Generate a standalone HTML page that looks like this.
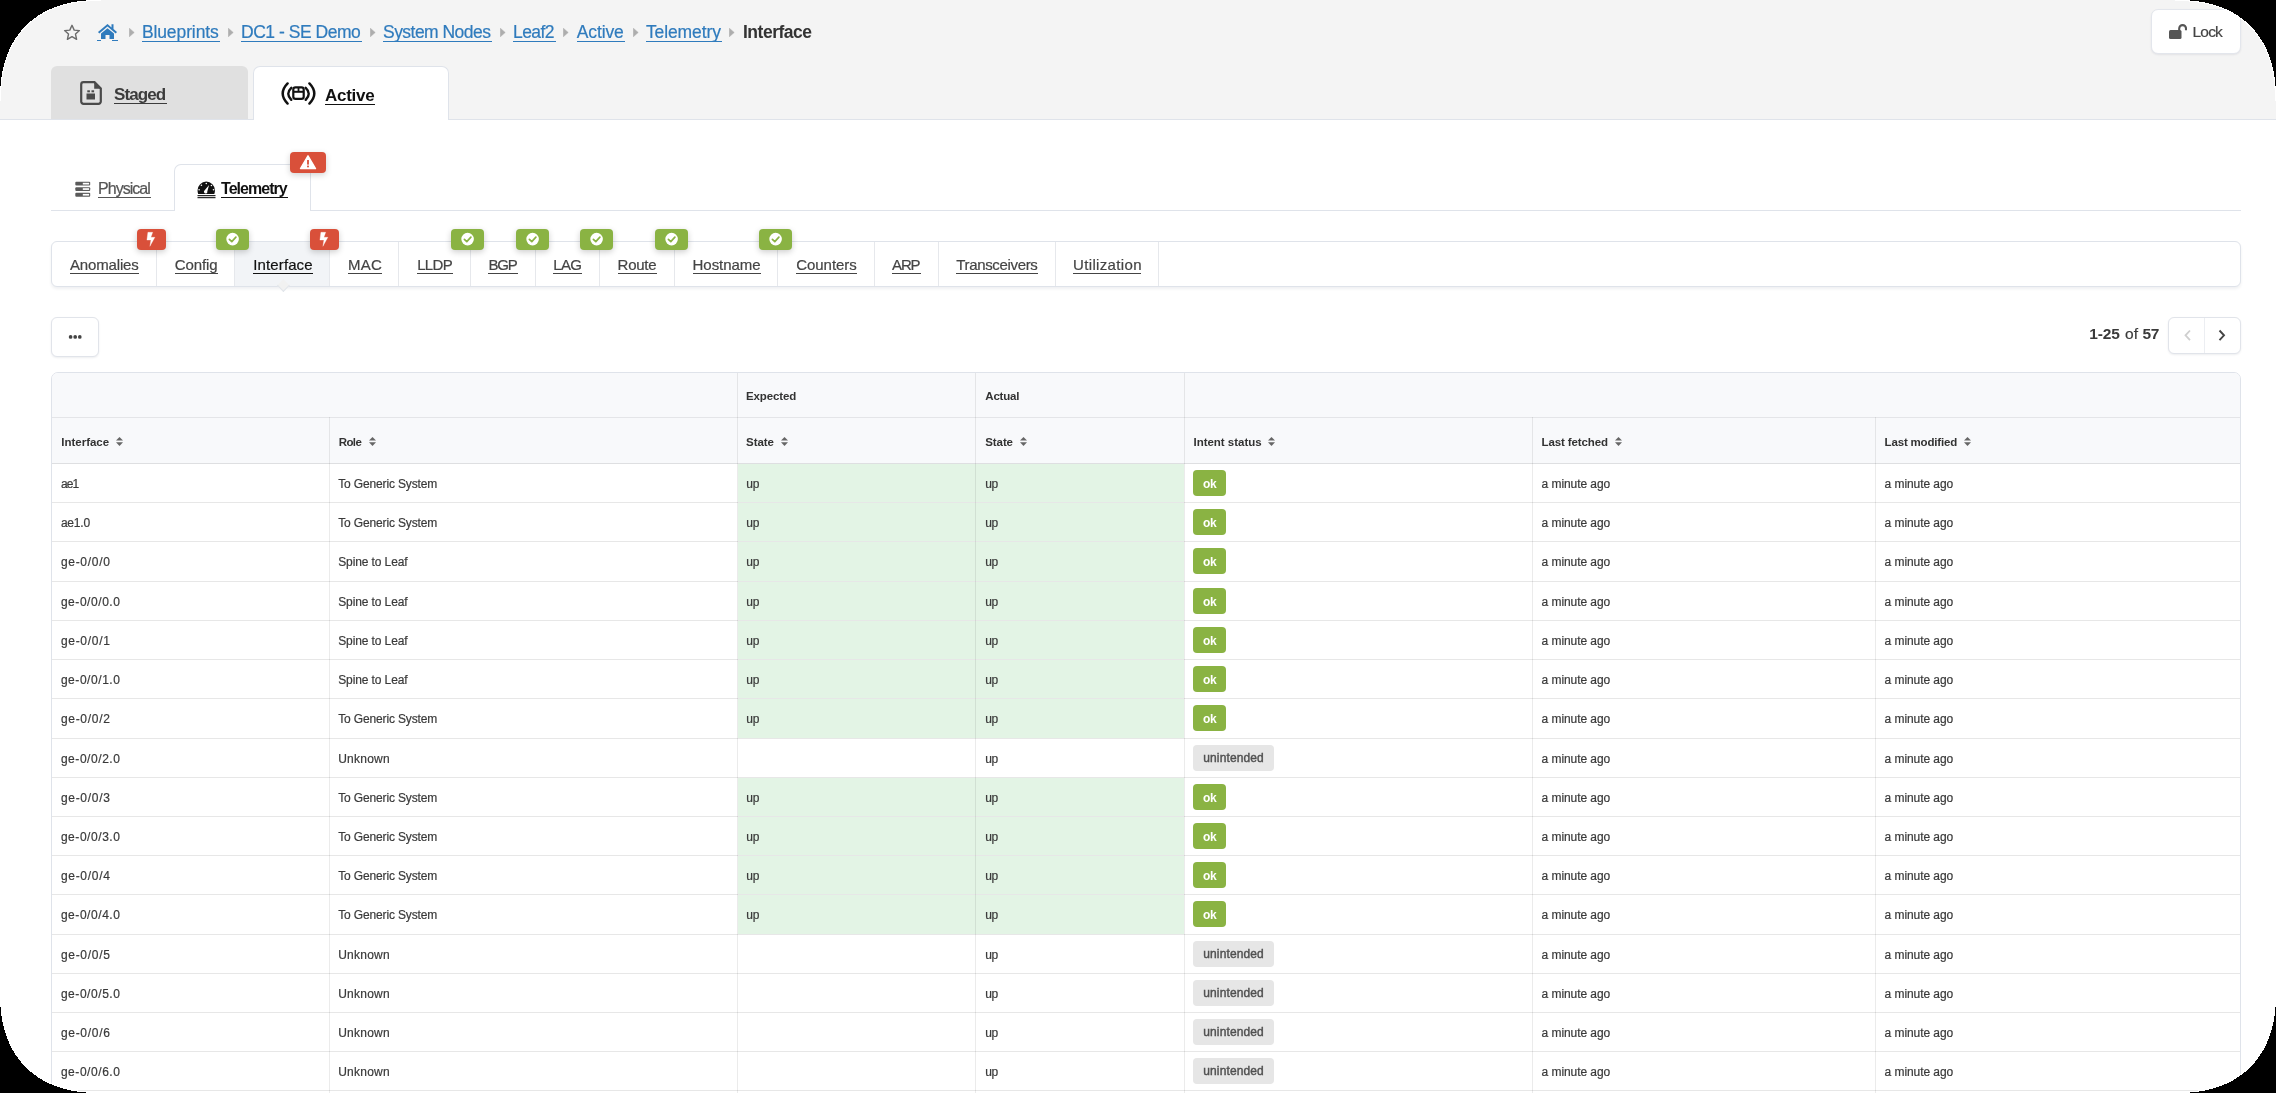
<!DOCTYPE html>
<html><head><meta charset="utf-8">
<style>
html,body{margin:0;padding:0;background:#000;width:2276px;height:1093px;overflow:hidden}
*{box-sizing:border-box}
body{font-family:"Liberation Sans",sans-serif;-webkit-font-smoothing:antialiased}
.page{position:absolute;left:0;top:0;width:2276px;height:1093px;overflow:hidden;background:#fff;will-change:transform}
.cn{position:absolute;display:block}
.a{position:absolute}
.t{position:absolute;white-space:nowrap}
svg{display:block}
</style></head><body>
<div class="page">
<div class="a" style="left:0;top:0;width:2276px;height:119px;background:#f4f4f4"></div>
<div class="a" style="left:0;top:119px;width:2276px;height:1px;background:#dfe3ea"></div>
<div class="a" style="left:63px;top:24px;width:18px;height:17px"><svg width="18" height="17" viewBox="0 0 18 17"><path d="M9 1.3 L11.2 6.1 L16.4 6.6 L12.5 10.1 L13.6 15.3 L9 12.6 L4.4 15.3 L5.5 10.1 L1.6 6.6 L6.8 6.1 Z" fill="none" stroke="#6b6b6b" stroke-width="1.4" stroke-linejoin="round"/></svg></div>
<div class="a" style="left:97px;top:23px;width:21px;height:17px"><svg width="21" height="17" viewBox="0 0 21 17"><path d="M10.5 1 L1 9 L2.3 10.4 L10.5 3.6 L18.7 10.4 L20 9 L16.5 6.1 L16.5 1.2 L14.5 1.2 L14.5 4.4 Z" fill="#2f7bbd"/><path d="M4 10.5 L10.5 5.2 L17 10.5 L17 16 L12.5 16 L12.5 12 L8.5 12 L8.5 16 L4 16 Z" fill="#2f7bbd"/></svg></div>
<div class="a" style="left:97.0px;top:40px;width:4.0px;height:1px;background:#2f7bbd"></div>
<div class="a" style="left:112.0px;top:40px;width:6.0px;height:1px;background:#2f7bbd"></div>
<div class="a" style="left:128.9px;top:28px;width:6px;height:9px"><svg width="6" height="9" viewBox="0 0 6 9"><path d="M0.3 0.2 L5.2 4.5 L0.3 8.8 Z" fill="#adadad" stroke="#adadad" stroke-width="0.5" stroke-linejoin="round"/></svg></div>
<div class="a" style="left:227.8px;top:28px;width:6px;height:9px"><svg width="6" height="9" viewBox="0 0 6 9"><path d="M0.3 0.2 L5.2 4.5 L0.3 8.8 Z" fill="#adadad" stroke="#adadad" stroke-width="0.5" stroke-linejoin="round"/></svg></div>
<div class="a" style="left:369.6px;top:28px;width:6px;height:9px"><svg width="6" height="9" viewBox="0 0 6 9"><path d="M0.3 0.2 L5.2 4.5 L0.3 8.8 Z" fill="#adadad" stroke="#adadad" stroke-width="0.5" stroke-linejoin="round"/></svg></div>
<div class="a" style="left:500.0px;top:28px;width:6px;height:9px"><svg width="6" height="9" viewBox="0 0 6 9"><path d="M0.3 0.2 L5.2 4.5 L0.3 8.8 Z" fill="#adadad" stroke="#adadad" stroke-width="0.5" stroke-linejoin="round"/></svg></div>
<div class="a" style="left:563.0px;top:28px;width:6px;height:9px"><svg width="6" height="9" viewBox="0 0 6 9"><path d="M0.3 0.2 L5.2 4.5 L0.3 8.8 Z" fill="#adadad" stroke="#adadad" stroke-width="0.5" stroke-linejoin="round"/></svg></div>
<div class="a" style="left:632.8px;top:28px;width:6px;height:9px"><svg width="6" height="9" viewBox="0 0 6 9"><path d="M0.3 0.2 L5.2 4.5 L0.3 8.8 Z" fill="#adadad" stroke="#adadad" stroke-width="0.5" stroke-linejoin="round"/></svg></div>
<div class="a" style="left:729.3px;top:28px;width:6px;height:9px"><svg width="6" height="9" viewBox="0 0 6 9"><path d="M0.3 0.2 L5.2 4.5 L0.3 8.8 Z" fill="#adadad" stroke="#adadad" stroke-width="0.5" stroke-linejoin="round"/></svg></div>
<div class="t" style="left:141.90px;top:24px;font-size:17.5px;line-height:17.5px;color:#2f7bbd;-webkit-text-stroke:0.2px currentColor;letter-spacing:-0.103px;">Blueprints</div>
<div class="a" style="left:141.9px;top:41px;width:77.9px;height:1px;background:#2f7bbd"></div>
<div class="t" style="left:241.00px;top:24px;font-size:17.5px;line-height:17.5px;color:#2f7bbd;-webkit-text-stroke:0.2px currentColor;letter-spacing:-0.471px;">DC1 - SE Demo</div>
<div class="a" style="left:241.0px;top:41px;width:120.8px;height:1px;background:#2f7bbd"></div>
<div class="t" style="left:383.00px;top:24px;font-size:17.5px;line-height:17.5px;color:#2f7bbd;-webkit-text-stroke:0.2px currentColor;letter-spacing:-0.536px;">System Nodes</div>
<div class="a" style="left:383.0px;top:41px;width:108.9px;height:1px;background:#2f7bbd"></div>
<div class="t" style="left:513.00px;top:24px;font-size:17.5px;line-height:17.5px;color:#2f7bbd;-webkit-text-stroke:0.2px currentColor;letter-spacing:-0.549px;">Leaf2</div>
<div class="a" style="left:513.0px;top:41px;width:42.6px;height:1px;background:#2f7bbd"></div>
<div class="t" style="left:576.80px;top:24px;font-size:17.5px;line-height:17.5px;color:#2f7bbd;-webkit-text-stroke:0.2px currentColor;letter-spacing:-0.131px;">Active</div>
<div class="a" style="left:576.8px;top:41px;width:48.0px;height:1px;background:#2f7bbd"></div>
<div class="t" style="left:645.90px;top:24px;font-size:17.5px;line-height:17.5px;color:#2f7bbd;-webkit-text-stroke:0.2px currentColor;letter-spacing:-0.107px;">Telemetry</div>
<div class="a" style="left:645.9px;top:41px;width:76.0px;height:1px;background:#2f7bbd"></div>
<div class="t" style="left:743.00px;top:24px;font-size:17.5px;line-height:17.5px;color:#333;font-weight:bold;letter-spacing:-0.494px;">Interface</div>
<div class="a" style="left:51px;top:66px;width:197px;height:53px;background:#e0e0e0;border-radius:6px 6px 0 0"></div>
<div class="a" style="left:253px;top:66px;width:196px;height:54px;background:#fff;border:1px solid #dfe3ea;border-bottom:none;border-radius:7px 7px 0 0"></div>
<div class="a" style="left:80px;top:81px;width:22px;height:24px"><svg width="22" height="24" viewBox="0 0 22 24"><path d="M3.5 1.2 H14.5 L20.8 7.5 V20.5 A2.3 2.3 0 0 1 18.5 22.8 H3.5 A2.3 2.3 0 0 1 1.2 20.5 V3.5 A2.3 2.3 0 0 1 3.5 1.2 Z" fill="none" stroke="#4a4a4a" stroke-width="2.2"/><path d="M14.2 1.5 L20.5 7.8 L14.2 7.8 Z" fill="#4a4a4a"/><rect x="6.5" y="12.5" width="8.5" height="6" fill="#4a4a4a"/><rect x="7.3" y="9.3" width="2.6" height="2" fill="#4a4a4a"/><rect x="11.5" y="9.3" width="2.6" height="2" fill="#4a4a4a"/></svg></div>
<div class="t" style="left:114.00px;top:86px;font-size:17px;line-height:17px;color:#3c3c3c;font-weight:bold;letter-spacing:-0.917px;">Staged</div>
<div class="a" style="left:114.0px;top:103px;width:52.5px;height:1px;background:#3c3c3c"></div>
<div class="a" style="left:281px;top:82px;width:35px;height:23px"><svg width="35" height="23" viewBox="0 0 35 23"><path d="M6.6 1.4 Q-3.2 11.5 6.6 21.6" fill="none" stroke="#111" stroke-width="2.4" stroke-linecap="round"/><path d="M28.4 1.4 Q38.2 11.5 28.4 21.6" fill="none" stroke="#111" stroke-width="2.4" stroke-linecap="round"/><path d="M10.3 5.8 Q4.2 11.5 10.3 17.8" fill="none" stroke="#111" stroke-width="2.4" stroke-linecap="round"/><path d="M24.7 5.8 Q30.8 11.5 24.7 17.8" fill="none" stroke="#111" stroke-width="2.4" stroke-linecap="round"/><rect x="12.3" y="5.3" width="10.4" height="11.6" rx="2.2" fill="none" stroke="#111" stroke-width="2.2"/><line x1="12.3" y1="9.8" x2="22.7" y2="9.8" stroke="#111" stroke-width="2"/><line x1="17.5" y1="5.3" x2="17.5" y2="9.8" stroke="#111" stroke-width="1.8"/></svg></div>
<div class="t" style="left:325.00px;top:87px;font-size:17px;line-height:17px;color:#111;font-weight:bold;letter-spacing:-0.263px;">Active</div>
<div class="a" style="left:325.0px;top:104px;width:50.0px;height:1px;background:#111"></div>
<div class="a" style="left:2151px;top:9px;width:90px;height:45px;background:#fff;border:1px solid #e3e6ec;border-radius:7px;box-shadow:0 1px 2px rgba(20,30,60,.08)"></div>
<div class="a" style="left:2168px;top:23px;width:19px;height:17px"><svg width="19" height="17" viewBox="0 0 19 17"><rect x="1" y="7" width="12.5" height="9" rx="1.5" fill="#555"/><path d="M11.2 7.5 V5.5 A3.4 3.4 0 0 1 18 5.5 V7.3" fill="none" stroke="#555" stroke-width="2.1"/></svg></div>
<div class="t" style="left:2192.60px;top:24px;font-size:15.5px;line-height:15.5px;color:#444;-webkit-text-stroke:0.2px currentColor;letter-spacing:-0.850px;">Lock</div>
<div class="a" style="left:51px;top:210px;width:2190px;height:1px;background:#dfe3ea"></div>
<div class="a" style="left:174px;top:164px;width:137px;height:47px;background:#fff;border:1px solid #dfe3ea;border-bottom:none;border-radius:7px 7px 0 0"></div>
<div class="a" style="left:75px;top:181px;width:16px;height:17px"><svg width="16" height="17" viewBox="0 0 16 17"><rect x="0.3" y="0.8" width="14.9" height="3.7" rx="1" fill="#5a5a5a"/><rect x="0.3" y="6.2" width="14.9" height="3.7" rx="1" fill="#5a5a5a"/><rect x="0.3" y="11.8" width="14.9" height="3.9" rx="1" fill="#5a5a5a"/><rect x="7.8" y="1.8" width="6.3" height="1.7" fill="#fff"/><rect x="7.8" y="7.2" width="6.3" height="1.7" fill="#fff"/><rect x="7.8" y="12.9" width="6.3" height="1.7" fill="#fff"/></svg></div>
<div class="t" style="left:98.10px;top:181px;font-size:16px;line-height:16px;color:#555;-webkit-text-stroke:0.2px currentColor;letter-spacing:-0.987px;">Physical</div>
<div class="a" style="left:98.0px;top:197px;width:53.0px;height:1px;background:#555"></div>
<div class="a" style="left:197px;top:181px;width:19px;height:18px"><svg width="19" height="18" viewBox="0 0 19 18"><path d="M9.25 0.6 A8.7 8.7 0 0 1 17.95 9.3 Q17.95 11.4 17.3 12.9 H1.2 Q0.55 11.4 0.55 9.3 A8.7 8.7 0 0 1 9.25 0.6 Z" fill="#111"/><circle cx="9.3" cy="2.5" r="0.8" fill="#fff"/><circle cx="4.4" cy="4.3" r="0.8" fill="#fff"/><circle cx="14.4" cy="4.5" r="0.8" fill="#fff"/><circle cx="2.1" cy="8.8" r="0.8" fill="#fff"/><circle cx="16.5" cy="8.8" r="0.8" fill="#fff"/><path d="M12.1 4.1 L10.3 10.4 A1.7 1.7 0 1 1 7.5 9.6 Z" fill="#fff"/><rect x="0.5" y="14.1" width="18" height="1.1" fill="#111"/><rect x="0.5" y="16.1" width="18" height="1.1" fill="#111"/></svg></div>
<div class="t" style="left:221.00px;top:181px;font-size:16px;line-height:16px;color:#111;font-weight:bold;letter-spacing:-0.959px;">Telemetry</div>
<div class="a" style="left:221.0px;top:197px;width:67.0px;height:1px;background:#111"></div>
<div class="a" style="left:290px;top:152px;width:36px;height:21px;background:#d9503a;border-radius:4px;box-shadow:0 2px 6px rgba(0,0,0,.18)"><svg width="36" height="21" viewBox="0 0 36 21" style="position:absolute;left:0;top:0"><path d="M18 3.8 L25.5 16.6 H10.5 Z" fill="#fff" stroke="#fff" stroke-width="1.4" stroke-linejoin="round"/><rect x="17.1" y="8" width="1.8" height="4.6" fill="#d9503a"/><rect x="17.1" y="13.6" width="1.8" height="1.7" fill="#d9503a"/></svg></div>
<div class="a" style="left:51px;top:241px;width:2190px;height:46px;background:#fff;border:1px solid #dfe3ea;border-radius:6px;box-shadow:0 2px 3px rgba(30,40,70,.07)"></div>
<div class="a" style="left:234.5px;top:242px;width:94.5px;height:44px;background:#f2f4f7"></div>
<div class="a" style="left:156px;top:242px;width:1px;height:44px;background:#e6e8ec"></div>
<div class="t" style="left:70.00px;top:257px;font-size:15px;line-height:15px;color:#444;-webkit-text-stroke:0.2px currentColor;letter-spacing:-0.154px;">Anomalies</div>
<div class="a" style="left:70.0px;top:273px;width:68.8px;height:1px;background:#444"></div>
<div class="a" style="left:234px;top:242px;width:1px;height:44px;background:#e6e8ec"></div>
<div class="t" style="left:174.80px;top:257px;font-size:15px;line-height:15px;color:#444;-webkit-text-stroke:0.2px currentColor;letter-spacing:-0.092px;">Config</div>
<div class="a" style="left:174.8px;top:273px;width:42.9px;height:1px;background:#444"></div>
<div class="a" style="left:329px;top:242px;width:1px;height:44px;background:#e6e8ec"></div>
<div class="t" style="left:253.30px;top:257px;font-size:15px;line-height:15px;color:#111;-webkit-text-stroke:0.2px currentColor;letter-spacing:0.114px;">Interface</div>
<div class="a" style="left:253.3px;top:273px;width:59.3px;height:1px;background:#111"></div>
<div class="a" style="left:398px;top:242px;width:1px;height:44px;background:#e6e8ec"></div>
<div class="t" style="left:348.10px;top:257px;font-size:15px;line-height:15px;color:#444;-webkit-text-stroke:0.2px currentColor;letter-spacing:0.236px;">MAC</div>
<div class="a" style="left:348.1px;top:273px;width:33.8px;height:1px;background:#444"></div>
<div class="a" style="left:470px;top:242px;width:1px;height:44px;background:#e6e8ec"></div>
<div class="t" style="left:417.20px;top:257px;font-size:15px;line-height:15px;color:#444;-webkit-text-stroke:0.2px currentColor;letter-spacing:-0.672px;">LLDP</div>
<div class="a" style="left:417.2px;top:273px;width:35.5px;height:1px;background:#444"></div>
<div class="a" style="left:535px;top:242px;width:1px;height:44px;background:#e6e8ec"></div>
<div class="t" style="left:488.40px;top:257px;font-size:15px;line-height:15px;color:#444;-webkit-text-stroke:0.2px currentColor;letter-spacing:-1.136px;">BGP</div>
<div class="a" style="left:488.4px;top:273px;width:29.4px;height:1px;background:#444"></div>
<div class="a" style="left:599px;top:242px;width:1px;height:44px;background:#e6e8ec"></div>
<div class="t" style="left:553.30px;top:257px;font-size:15px;line-height:15px;color:#444;-webkit-text-stroke:0.2px currentColor;letter-spacing:-0.708px;">LAG</div>
<div class="a" style="left:553.3px;top:273px;width:28.6px;height:1px;background:#444"></div>
<div class="a" style="left:674px;top:242px;width:1px;height:44px;background:#e6e8ec"></div>
<div class="t" style="left:617.60px;top:257px;font-size:15px;line-height:15px;color:#444;-webkit-text-stroke:0.2px currentColor;letter-spacing:-0.258px;">Route</div>
<div class="a" style="left:617.6px;top:273px;width:39.0px;height:1px;background:#444"></div>
<div class="a" style="left:777px;top:242px;width:1px;height:44px;background:#e6e8ec"></div>
<div class="t" style="left:692.60px;top:257px;font-size:15px;line-height:15px;color:#444;-webkit-text-stroke:0.2px currentColor;letter-spacing:-0.054px;">Hostname</div>
<div class="a" style="left:692.6px;top:273px;width:68.0px;height:1px;background:#444"></div>
<div class="a" style="left:874px;top:242px;width:1px;height:44px;background:#e6e8ec"></div>
<div class="t" style="left:796.20px;top:257px;font-size:15px;line-height:15px;color:#444;-webkit-text-stroke:0.2px currentColor;letter-spacing:-0.039px;">Counters</div>
<div class="a" style="left:796.2px;top:273px;width:60.6px;height:1px;background:#444"></div>
<div class="a" style="left:938px;top:242px;width:1px;height:44px;background:#e6e8ec"></div>
<div class="t" style="left:892.10px;top:257px;font-size:15px;line-height:15px;color:#444;-webkit-text-stroke:0.2px currentColor;letter-spacing:-1.164px;">ARP</div>
<div class="a" style="left:892.1px;top:273px;width:28.5px;height:1px;background:#444"></div>
<div class="a" style="left:1055px;top:242px;width:1px;height:44px;background:#e6e8ec"></div>
<div class="t" style="left:956.30px;top:257px;font-size:15px;line-height:15px;color:#444;-webkit-text-stroke:0.2px currentColor;letter-spacing:-0.345px;">Transceivers</div>
<div class="a" style="left:956.3px;top:273px;width:81.5px;height:1px;background:#444"></div>
<div class="a" style="left:1158px;top:242px;width:1px;height:44px;background:#e6e8ec"></div>
<div class="t" style="left:1073.10px;top:257px;font-size:15px;line-height:15px;color:#444;-webkit-text-stroke:0.2px currentColor;letter-spacing:0.338px;">Utilization</div>
<div class="a" style="left:1073.1px;top:273px;width:68.4px;height:1px;background:#444"></div>
<div class="a" style="left:278.6px;top:281.2px;width:8.8px;height:8.8px;background:#f1f1f1;transform:rotate(45deg);border-right:1px solid #e1e5ea;border-bottom:1px solid #e1e5ea"></div>
<div class="a" style="left:137.3px;top:229px;width:29px;height:21px;background:#d9503a;border-radius:4px;box-shadow:0 2px 6px rgba(0,0,0,.2)"><svg width="29" height="21" viewBox="0 0 29 21" style="position:absolute;left:0;top:0"><path d="M10.9 3.3 H15.7 L13.9 8.3 H17.9 L12.9 17.3 L13.9 11.1 H9.9 Z" fill="#fff" stroke="#fff" stroke-width="0.3" stroke-linejoin="round"/></svg></div>
<div class="a" style="left:216px;top:229px;width:33px;height:21px;background:#8ab343;border-radius:4px;box-shadow:0 2px 6px rgba(0,0,0,.2)"><svg width="33" height="21" viewBox="0 0 33 21" style="position:absolute;left:0;top:0"><circle cx="16.6" cy="10.1" r="6.3" fill="#fff"/><path d="M13.4 10.3 L15.8 12.6 L19.9 8.2" fill="none" stroke="#8ab343" stroke-width="1.7" stroke-linecap="round" stroke-linejoin="round"/></svg></div>
<div class="a" style="left:310.2px;top:229px;width:29px;height:21px;background:#d9503a;border-radius:4px;box-shadow:0 2px 6px rgba(0,0,0,.2)"><svg width="29" height="21" viewBox="0 0 29 21" style="position:absolute;left:0;top:0"><path d="M10.9 3.3 H15.7 L13.9 8.3 H17.9 L12.9 17.3 L13.9 11.1 H9.9 Z" fill="#fff" stroke="#fff" stroke-width="0.3" stroke-linejoin="round"/></svg></div>
<div class="a" style="left:451px;top:229px;width:33px;height:21px;background:#8ab343;border-radius:4px;box-shadow:0 2px 6px rgba(0,0,0,.2)"><svg width="33" height="21" viewBox="0 0 33 21" style="position:absolute;left:0;top:0"><circle cx="16.6" cy="10.1" r="6.3" fill="#fff"/><path d="M13.4 10.3 L15.8 12.6 L19.9 8.2" fill="none" stroke="#8ab343" stroke-width="1.7" stroke-linecap="round" stroke-linejoin="round"/></svg></div>
<div class="a" style="left:516px;top:229px;width:33px;height:21px;background:#8ab343;border-radius:4px;box-shadow:0 2px 6px rgba(0,0,0,.2)"><svg width="33" height="21" viewBox="0 0 33 21" style="position:absolute;left:0;top:0"><circle cx="16.6" cy="10.1" r="6.3" fill="#fff"/><path d="M13.4 10.3 L15.8 12.6 L19.9 8.2" fill="none" stroke="#8ab343" stroke-width="1.7" stroke-linecap="round" stroke-linejoin="round"/></svg></div>
<div class="a" style="left:580px;top:229px;width:33px;height:21px;background:#8ab343;border-radius:4px;box-shadow:0 2px 6px rgba(0,0,0,.2)"><svg width="33" height="21" viewBox="0 0 33 21" style="position:absolute;left:0;top:0"><circle cx="16.6" cy="10.1" r="6.3" fill="#fff"/><path d="M13.4 10.3 L15.8 12.6 L19.9 8.2" fill="none" stroke="#8ab343" stroke-width="1.7" stroke-linecap="round" stroke-linejoin="round"/></svg></div>
<div class="a" style="left:655px;top:229px;width:33px;height:21px;background:#8ab343;border-radius:4px;box-shadow:0 2px 6px rgba(0,0,0,.2)"><svg width="33" height="21" viewBox="0 0 33 21" style="position:absolute;left:0;top:0"><circle cx="16.6" cy="10.1" r="6.3" fill="#fff"/><path d="M13.4 10.3 L15.8 12.6 L19.9 8.2" fill="none" stroke="#8ab343" stroke-width="1.7" stroke-linecap="round" stroke-linejoin="round"/></svg></div>
<div class="a" style="left:759px;top:229px;width:33px;height:21px;background:#8ab343;border-radius:4px;box-shadow:0 2px 6px rgba(0,0,0,.2)"><svg width="33" height="21" viewBox="0 0 33 21" style="position:absolute;left:0;top:0"><circle cx="16.6" cy="10.1" r="6.3" fill="#fff"/><path d="M13.4 10.3 L15.8 12.6 L19.9 8.2" fill="none" stroke="#8ab343" stroke-width="1.7" stroke-linecap="round" stroke-linejoin="round"/></svg></div>
<div class="a" style="left:51px;top:317px;width:48px;height:40px;background:#fff;border:1px solid #e1e4ea;border-radius:6px;box-shadow:0 1px 2px rgba(30,40,70,.08)"><svg width="48" height="40" style="position:absolute;left:-1px;top:-1px"><circle cx="19.6" cy="19.9" r="1.85" fill="#444"/><circle cx="24.2" cy="19.9" r="1.85" fill="#444"/><circle cx="28.8" cy="19.9" r="1.85" fill="#444"/></svg></div>
<div class="t" style="left:2089.30px;top:326px;font-size:15.5px;line-height:15.5px;color:#3a3a3a;font-weight:bold;letter-spacing:-0.144px;">1-25</div>
<div class="t" style="left:2124.90px;top:326px;font-size:15.5px;line-height:15.5px;color:#3a3a3a;-webkit-text-stroke:0.2px currentColor;letter-spacing:0.262px;">of</div>
<div class="t" style="left:2142.50px;top:326px;font-size:15.5px;line-height:15.5px;color:#3a3a3a;font-weight:bold;letter-spacing:-0.450px;">57</div>
<div class="a" style="left:2167.5px;top:317px;width:73px;height:37px;background:#fff;border:1px solid #e1e4ea;border-radius:6px;box-shadow:0 1px 2px rgba(30,40,70,.08)"><div style="position:absolute;left:35px;top:0;width:1px;height:35px;background:#eceef2"></div><svg width="73" height="37" style="position:absolute;left:-1px;top:-1px"><path d="M22 13.5 L17.5 18.3 L22 23.1" fill="none" stroke="#cfcfcf" stroke-width="1.8"/><path d="M51.5 13.5 L56 18.3 L51.5 23.1" fill="none" stroke="#444" stroke-width="1.9"/></svg></div>
<div class="a" style="left:51px;top:372px;width:2190px;height:740px;background:#fff;border:1px solid #dfe3ea;border-radius:7px;overflow:hidden"><div style="position:absolute;left:0;top:0;width:100%;height:91px;background:#f8f9fb"></div></div>
<div class="a" style="left:52px;top:417px;width:2188px;height:1px;background:#e4e5e8"></div>
<div class="a" style="left:738px;top:464px;width:446px;height:38px;background:#e3f4e5"></div>
<div class="a" style="left:738px;top:503px;width:446px;height:38px;background:#e3f4e5"></div>
<div class="a" style="left:738px;top:542px;width:446px;height:39px;background:#e3f4e5"></div>
<div class="a" style="left:738px;top:582px;width:446px;height:38px;background:#e3f4e5"></div>
<div class="a" style="left:738px;top:621px;width:446px;height:38px;background:#e3f4e5"></div>
<div class="a" style="left:738px;top:660px;width:446px;height:38px;background:#e3f4e5"></div>
<div class="a" style="left:738px;top:699px;width:446px;height:39px;background:#e3f4e5"></div>
<div class="a" style="left:738px;top:778px;width:446px;height:38px;background:#e3f4e5"></div>
<div class="a" style="left:738px;top:817px;width:446px;height:38px;background:#e3f4e5"></div>
<div class="a" style="left:738px;top:856px;width:446px;height:38px;background:#e3f4e5"></div>
<div class="a" style="left:738px;top:895px;width:446px;height:39px;background:#e3f4e5"></div>
<div class="a" style="left:52px;top:463px;width:2188px;height:1px;background:rgba(0,0,0,.1)"></div>
<div class="a" style="left:52px;top:502px;width:2188px;height:1px;background:rgba(0,0,0,.095)"></div>
<div class="t" style="left:60.90px;top:478px;font-size:12px;line-height:12px;color:#3a3a3a;-webkit-text-stroke:0.2px currentColor;letter-spacing:-0.858px;">ae1</div>
<div class="t" style="left:338.20px;top:478px;font-size:12px;line-height:12px;color:#3a3a3a;-webkit-text-stroke:0.2px currentColor;letter-spacing:-0.146px;">To Generic System</div>
<div class="t" style="left:746.30px;top:478px;font-size:12px;line-height:12px;color:#3a3a3a;-webkit-text-stroke:0.2px currentColor;letter-spacing:-0.344px;">up</div>
<div class="t" style="left:985.20px;top:478px;font-size:12px;line-height:12px;color:#3a3a3a;-webkit-text-stroke:0.2px currentColor;letter-spacing:-0.344px;">up</div>
<div class="t" style="left:1541.60px;top:478px;font-size:12px;line-height:12px;color:#3a3a3a;-webkit-text-stroke:0.2px currentColor;letter-spacing:-0.069px;">a minute ago</div>
<div class="t" style="left:1884.60px;top:478px;font-size:12px;line-height:12px;color:#3a3a3a;-webkit-text-stroke:0.2px currentColor;letter-spacing:-0.069px;">a minute ago</div>
<div class="a" style="left:1193px;top:470px;width:33px;height:26px;background:#8ab343;border-radius:4px"></div>
<div class="t" style="left:1203.00px;top:478px;font-size:12px;line-height:12px;color:#fff;font-weight:bold;letter-spacing:-0.300px;">ok</div>
<div class="a" style="left:52px;top:541px;width:2188px;height:1px;background:rgba(0,0,0,.095)"></div>
<div class="t" style="left:60.90px;top:517px;font-size:12px;line-height:12px;color:#3a3a3a;-webkit-text-stroke:0.2px currentColor;letter-spacing:-0.204px;">ae1.0</div>
<div class="t" style="left:338.20px;top:517px;font-size:12px;line-height:12px;color:#3a3a3a;-webkit-text-stroke:0.2px currentColor;letter-spacing:-0.146px;">To Generic System</div>
<div class="t" style="left:746.30px;top:517px;font-size:12px;line-height:12px;color:#3a3a3a;-webkit-text-stroke:0.2px currentColor;letter-spacing:-0.344px;">up</div>
<div class="t" style="left:985.20px;top:517px;font-size:12px;line-height:12px;color:#3a3a3a;-webkit-text-stroke:0.2px currentColor;letter-spacing:-0.344px;">up</div>
<div class="t" style="left:1541.60px;top:517px;font-size:12px;line-height:12px;color:#3a3a3a;-webkit-text-stroke:0.2px currentColor;letter-spacing:-0.069px;">a minute ago</div>
<div class="t" style="left:1884.60px;top:517px;font-size:12px;line-height:12px;color:#3a3a3a;-webkit-text-stroke:0.2px currentColor;letter-spacing:-0.069px;">a minute ago</div>
<div class="a" style="left:1193px;top:509px;width:33px;height:26px;background:#8ab343;border-radius:4px"></div>
<div class="t" style="left:1203.00px;top:517px;font-size:12px;line-height:12px;color:#fff;font-weight:bold;letter-spacing:-0.300px;">ok</div>
<div class="a" style="left:52px;top:581px;width:2188px;height:1px;background:rgba(0,0,0,.095)"></div>
<div class="t" style="left:60.90px;top:556px;font-size:12px;line-height:12px;color:#3a3a3a;-webkit-text-stroke:0.2px currentColor;letter-spacing:0.712px;">ge-0/0/0</div>
<div class="t" style="left:338.20px;top:556px;font-size:12px;line-height:12px;color:#3a3a3a;-webkit-text-stroke:0.2px currentColor;letter-spacing:-0.107px;">Spine to Leaf</div>
<div class="t" style="left:746.30px;top:556px;font-size:12px;line-height:12px;color:#3a3a3a;-webkit-text-stroke:0.2px currentColor;letter-spacing:-0.344px;">up</div>
<div class="t" style="left:985.20px;top:556px;font-size:12px;line-height:12px;color:#3a3a3a;-webkit-text-stroke:0.2px currentColor;letter-spacing:-0.344px;">up</div>
<div class="t" style="left:1541.60px;top:556px;font-size:12px;line-height:12px;color:#3a3a3a;-webkit-text-stroke:0.2px currentColor;letter-spacing:-0.069px;">a minute ago</div>
<div class="t" style="left:1884.60px;top:556px;font-size:12px;line-height:12px;color:#3a3a3a;-webkit-text-stroke:0.2px currentColor;letter-spacing:-0.069px;">a minute ago</div>
<div class="a" style="left:1193px;top:548px;width:33px;height:26px;background:#8ab343;border-radius:4px"></div>
<div class="t" style="left:1203.00px;top:556px;font-size:12px;line-height:12px;color:#fff;font-weight:bold;letter-spacing:-0.300px;">ok</div>
<div class="a" style="left:52px;top:620px;width:2188px;height:1px;background:rgba(0,0,0,.095)"></div>
<div class="t" style="left:60.90px;top:596px;font-size:12px;line-height:12px;color:#3a3a3a;-webkit-text-stroke:0.2px currentColor;letter-spacing:0.554px;">ge-0/0/0.0</div>
<div class="t" style="left:338.20px;top:596px;font-size:12px;line-height:12px;color:#3a3a3a;-webkit-text-stroke:0.2px currentColor;letter-spacing:-0.107px;">Spine to Leaf</div>
<div class="t" style="left:746.30px;top:596px;font-size:12px;line-height:12px;color:#3a3a3a;-webkit-text-stroke:0.2px currentColor;letter-spacing:-0.344px;">up</div>
<div class="t" style="left:985.20px;top:596px;font-size:12px;line-height:12px;color:#3a3a3a;-webkit-text-stroke:0.2px currentColor;letter-spacing:-0.344px;">up</div>
<div class="t" style="left:1541.60px;top:596px;font-size:12px;line-height:12px;color:#3a3a3a;-webkit-text-stroke:0.2px currentColor;letter-spacing:-0.069px;">a minute ago</div>
<div class="t" style="left:1884.60px;top:596px;font-size:12px;line-height:12px;color:#3a3a3a;-webkit-text-stroke:0.2px currentColor;letter-spacing:-0.069px;">a minute ago</div>
<div class="a" style="left:1193px;top:588px;width:33px;height:26px;background:#8ab343;border-radius:4px"></div>
<div class="t" style="left:1203.00px;top:596px;font-size:12px;line-height:12px;color:#fff;font-weight:bold;letter-spacing:-0.300px;">ok</div>
<div class="a" style="left:52px;top:659px;width:2188px;height:1px;background:rgba(0,0,0,.095)"></div>
<div class="t" style="left:60.90px;top:635px;font-size:12px;line-height:12px;color:#3a3a3a;-webkit-text-stroke:0.2px currentColor;letter-spacing:0.712px;">ge-0/0/1</div>
<div class="t" style="left:338.20px;top:635px;font-size:12px;line-height:12px;color:#3a3a3a;-webkit-text-stroke:0.2px currentColor;letter-spacing:-0.107px;">Spine to Leaf</div>
<div class="t" style="left:746.30px;top:635px;font-size:12px;line-height:12px;color:#3a3a3a;-webkit-text-stroke:0.2px currentColor;letter-spacing:-0.344px;">up</div>
<div class="t" style="left:985.20px;top:635px;font-size:12px;line-height:12px;color:#3a3a3a;-webkit-text-stroke:0.2px currentColor;letter-spacing:-0.344px;">up</div>
<div class="t" style="left:1541.60px;top:635px;font-size:12px;line-height:12px;color:#3a3a3a;-webkit-text-stroke:0.2px currentColor;letter-spacing:-0.069px;">a minute ago</div>
<div class="t" style="left:1884.60px;top:635px;font-size:12px;line-height:12px;color:#3a3a3a;-webkit-text-stroke:0.2px currentColor;letter-spacing:-0.069px;">a minute ago</div>
<div class="a" style="left:1193px;top:627px;width:33px;height:26px;background:#8ab343;border-radius:4px"></div>
<div class="t" style="left:1203.00px;top:635px;font-size:12px;line-height:12px;color:#fff;font-weight:bold;letter-spacing:-0.300px;">ok</div>
<div class="a" style="left:52px;top:698px;width:2188px;height:1px;background:rgba(0,0,0,.095)"></div>
<div class="t" style="left:60.90px;top:674px;font-size:12px;line-height:12px;color:#3a3a3a;-webkit-text-stroke:0.2px currentColor;letter-spacing:0.554px;">ge-0/0/1.0</div>
<div class="t" style="left:338.20px;top:674px;font-size:12px;line-height:12px;color:#3a3a3a;-webkit-text-stroke:0.2px currentColor;letter-spacing:-0.107px;">Spine to Leaf</div>
<div class="t" style="left:746.30px;top:674px;font-size:12px;line-height:12px;color:#3a3a3a;-webkit-text-stroke:0.2px currentColor;letter-spacing:-0.344px;">up</div>
<div class="t" style="left:985.20px;top:674px;font-size:12px;line-height:12px;color:#3a3a3a;-webkit-text-stroke:0.2px currentColor;letter-spacing:-0.344px;">up</div>
<div class="t" style="left:1541.60px;top:674px;font-size:12px;line-height:12px;color:#3a3a3a;-webkit-text-stroke:0.2px currentColor;letter-spacing:-0.069px;">a minute ago</div>
<div class="t" style="left:1884.60px;top:674px;font-size:12px;line-height:12px;color:#3a3a3a;-webkit-text-stroke:0.2px currentColor;letter-spacing:-0.069px;">a minute ago</div>
<div class="a" style="left:1193px;top:666px;width:33px;height:26px;background:#8ab343;border-radius:4px"></div>
<div class="t" style="left:1203.00px;top:674px;font-size:12px;line-height:12px;color:#fff;font-weight:bold;letter-spacing:-0.300px;">ok</div>
<div class="a" style="left:52px;top:738px;width:2188px;height:1px;background:rgba(0,0,0,.095)"></div>
<div class="t" style="left:60.90px;top:713px;font-size:12px;line-height:12px;color:#3a3a3a;-webkit-text-stroke:0.2px currentColor;letter-spacing:0.712px;">ge-0/0/2</div>
<div class="t" style="left:338.20px;top:713px;font-size:12px;line-height:12px;color:#3a3a3a;-webkit-text-stroke:0.2px currentColor;letter-spacing:-0.146px;">To Generic System</div>
<div class="t" style="left:746.30px;top:713px;font-size:12px;line-height:12px;color:#3a3a3a;-webkit-text-stroke:0.2px currentColor;letter-spacing:-0.344px;">up</div>
<div class="t" style="left:985.20px;top:713px;font-size:12px;line-height:12px;color:#3a3a3a;-webkit-text-stroke:0.2px currentColor;letter-spacing:-0.344px;">up</div>
<div class="t" style="left:1541.60px;top:713px;font-size:12px;line-height:12px;color:#3a3a3a;-webkit-text-stroke:0.2px currentColor;letter-spacing:-0.069px;">a minute ago</div>
<div class="t" style="left:1884.60px;top:713px;font-size:12px;line-height:12px;color:#3a3a3a;-webkit-text-stroke:0.2px currentColor;letter-spacing:-0.069px;">a minute ago</div>
<div class="a" style="left:1193px;top:705px;width:33px;height:26px;background:#8ab343;border-radius:4px"></div>
<div class="t" style="left:1203.00px;top:713px;font-size:12px;line-height:12px;color:#fff;font-weight:bold;letter-spacing:-0.300px;">ok</div>
<div class="a" style="left:52px;top:777px;width:2188px;height:1px;background:rgba(0,0,0,.095)"></div>
<div class="t" style="left:60.90px;top:753px;font-size:12px;line-height:12px;color:#3a3a3a;-webkit-text-stroke:0.2px currentColor;letter-spacing:0.554px;">ge-0/0/2.0</div>
<div class="t" style="left:338.20px;top:753px;font-size:12px;line-height:12px;color:#3a3a3a;-webkit-text-stroke:0.2px currentColor;letter-spacing:0.245px;">Unknown</div>
<div class="t" style="left:985.20px;top:753px;font-size:12px;line-height:12px;color:#3a3a3a;-webkit-text-stroke:0.2px currentColor;letter-spacing:-0.344px;">up</div>
<div class="t" style="left:1541.60px;top:753px;font-size:12px;line-height:12px;color:#3a3a3a;-webkit-text-stroke:0.2px currentColor;letter-spacing:-0.069px;">a minute ago</div>
<div class="t" style="left:1884.60px;top:753px;font-size:12px;line-height:12px;color:#3a3a3a;-webkit-text-stroke:0.2px currentColor;letter-spacing:-0.069px;">a minute ago</div>
<div class="a" style="left:1193px;top:745px;width:81px;height:26px;background:#e6e6e6;border-radius:4px"></div>
<div class="t" style="left:1203.30px;top:752px;font-size:12px;line-height:12px;color:#505050;-webkit-text-stroke:0.2px currentColor;letter-spacing:0.114px;-webkit-text-stroke:0.4px #505050;">unintended</div>
<div class="a" style="left:52px;top:816px;width:2188px;height:1px;background:rgba(0,0,0,.095)"></div>
<div class="t" style="left:60.90px;top:792px;font-size:12px;line-height:12px;color:#3a3a3a;-webkit-text-stroke:0.2px currentColor;letter-spacing:0.712px;">ge-0/0/3</div>
<div class="t" style="left:338.20px;top:792px;font-size:12px;line-height:12px;color:#3a3a3a;-webkit-text-stroke:0.2px currentColor;letter-spacing:-0.146px;">To Generic System</div>
<div class="t" style="left:746.30px;top:792px;font-size:12px;line-height:12px;color:#3a3a3a;-webkit-text-stroke:0.2px currentColor;letter-spacing:-0.344px;">up</div>
<div class="t" style="left:985.20px;top:792px;font-size:12px;line-height:12px;color:#3a3a3a;-webkit-text-stroke:0.2px currentColor;letter-spacing:-0.344px;">up</div>
<div class="t" style="left:1541.60px;top:792px;font-size:12px;line-height:12px;color:#3a3a3a;-webkit-text-stroke:0.2px currentColor;letter-spacing:-0.069px;">a minute ago</div>
<div class="t" style="left:1884.60px;top:792px;font-size:12px;line-height:12px;color:#3a3a3a;-webkit-text-stroke:0.2px currentColor;letter-spacing:-0.069px;">a minute ago</div>
<div class="a" style="left:1193px;top:784px;width:33px;height:26px;background:#8ab343;border-radius:4px"></div>
<div class="t" style="left:1203.00px;top:792px;font-size:12px;line-height:12px;color:#fff;font-weight:bold;letter-spacing:-0.300px;">ok</div>
<div class="a" style="left:52px;top:855px;width:2188px;height:1px;background:rgba(0,0,0,.095)"></div>
<div class="t" style="left:60.90px;top:831px;font-size:12px;line-height:12px;color:#3a3a3a;-webkit-text-stroke:0.2px currentColor;letter-spacing:0.554px;">ge-0/0/3.0</div>
<div class="t" style="left:338.20px;top:831px;font-size:12px;line-height:12px;color:#3a3a3a;-webkit-text-stroke:0.2px currentColor;letter-spacing:-0.146px;">To Generic System</div>
<div class="t" style="left:746.30px;top:831px;font-size:12px;line-height:12px;color:#3a3a3a;-webkit-text-stroke:0.2px currentColor;letter-spacing:-0.344px;">up</div>
<div class="t" style="left:985.20px;top:831px;font-size:12px;line-height:12px;color:#3a3a3a;-webkit-text-stroke:0.2px currentColor;letter-spacing:-0.344px;">up</div>
<div class="t" style="left:1541.60px;top:831px;font-size:12px;line-height:12px;color:#3a3a3a;-webkit-text-stroke:0.2px currentColor;letter-spacing:-0.069px;">a minute ago</div>
<div class="t" style="left:1884.60px;top:831px;font-size:12px;line-height:12px;color:#3a3a3a;-webkit-text-stroke:0.2px currentColor;letter-spacing:-0.069px;">a minute ago</div>
<div class="a" style="left:1193px;top:823px;width:33px;height:26px;background:#8ab343;border-radius:4px"></div>
<div class="t" style="left:1203.00px;top:831px;font-size:12px;line-height:12px;color:#fff;font-weight:bold;letter-spacing:-0.300px;">ok</div>
<div class="a" style="left:52px;top:894px;width:2188px;height:1px;background:rgba(0,0,0,.095)"></div>
<div class="t" style="left:60.90px;top:870px;font-size:12px;line-height:12px;color:#3a3a3a;-webkit-text-stroke:0.2px currentColor;letter-spacing:0.712px;">ge-0/0/4</div>
<div class="t" style="left:338.20px;top:870px;font-size:12px;line-height:12px;color:#3a3a3a;-webkit-text-stroke:0.2px currentColor;letter-spacing:-0.146px;">To Generic System</div>
<div class="t" style="left:746.30px;top:870px;font-size:12px;line-height:12px;color:#3a3a3a;-webkit-text-stroke:0.2px currentColor;letter-spacing:-0.344px;">up</div>
<div class="t" style="left:985.20px;top:870px;font-size:12px;line-height:12px;color:#3a3a3a;-webkit-text-stroke:0.2px currentColor;letter-spacing:-0.344px;">up</div>
<div class="t" style="left:1541.60px;top:870px;font-size:12px;line-height:12px;color:#3a3a3a;-webkit-text-stroke:0.2px currentColor;letter-spacing:-0.069px;">a minute ago</div>
<div class="t" style="left:1884.60px;top:870px;font-size:12px;line-height:12px;color:#3a3a3a;-webkit-text-stroke:0.2px currentColor;letter-spacing:-0.069px;">a minute ago</div>
<div class="a" style="left:1193px;top:862px;width:33px;height:26px;background:#8ab343;border-radius:4px"></div>
<div class="t" style="left:1203.00px;top:870px;font-size:12px;line-height:12px;color:#fff;font-weight:bold;letter-spacing:-0.300px;">ok</div>
<div class="a" style="left:52px;top:934px;width:2188px;height:1px;background:rgba(0,0,0,.095)"></div>
<div class="t" style="left:60.90px;top:909px;font-size:12px;line-height:12px;color:#3a3a3a;-webkit-text-stroke:0.2px currentColor;letter-spacing:0.554px;">ge-0/0/4.0</div>
<div class="t" style="left:338.20px;top:909px;font-size:12px;line-height:12px;color:#3a3a3a;-webkit-text-stroke:0.2px currentColor;letter-spacing:-0.146px;">To Generic System</div>
<div class="t" style="left:746.30px;top:909px;font-size:12px;line-height:12px;color:#3a3a3a;-webkit-text-stroke:0.2px currentColor;letter-spacing:-0.344px;">up</div>
<div class="t" style="left:985.20px;top:909px;font-size:12px;line-height:12px;color:#3a3a3a;-webkit-text-stroke:0.2px currentColor;letter-spacing:-0.344px;">up</div>
<div class="t" style="left:1541.60px;top:909px;font-size:12px;line-height:12px;color:#3a3a3a;-webkit-text-stroke:0.2px currentColor;letter-spacing:-0.069px;">a minute ago</div>
<div class="t" style="left:1884.60px;top:909px;font-size:12px;line-height:12px;color:#3a3a3a;-webkit-text-stroke:0.2px currentColor;letter-spacing:-0.069px;">a minute ago</div>
<div class="a" style="left:1193px;top:901px;width:33px;height:26px;background:#8ab343;border-radius:4px"></div>
<div class="t" style="left:1203.00px;top:909px;font-size:12px;line-height:12px;color:#fff;font-weight:bold;letter-spacing:-0.300px;">ok</div>
<div class="a" style="left:52px;top:973px;width:2188px;height:1px;background:rgba(0,0,0,.095)"></div>
<div class="t" style="left:60.90px;top:949px;font-size:12px;line-height:12px;color:#3a3a3a;-webkit-text-stroke:0.2px currentColor;letter-spacing:0.712px;">ge-0/0/5</div>
<div class="t" style="left:338.20px;top:949px;font-size:12px;line-height:12px;color:#3a3a3a;-webkit-text-stroke:0.2px currentColor;letter-spacing:0.245px;">Unknown</div>
<div class="t" style="left:985.20px;top:949px;font-size:12px;line-height:12px;color:#3a3a3a;-webkit-text-stroke:0.2px currentColor;letter-spacing:-0.344px;">up</div>
<div class="t" style="left:1541.60px;top:949px;font-size:12px;line-height:12px;color:#3a3a3a;-webkit-text-stroke:0.2px currentColor;letter-spacing:-0.069px;">a minute ago</div>
<div class="t" style="left:1884.60px;top:949px;font-size:12px;line-height:12px;color:#3a3a3a;-webkit-text-stroke:0.2px currentColor;letter-spacing:-0.069px;">a minute ago</div>
<div class="a" style="left:1193px;top:941px;width:81px;height:26px;background:#e6e6e6;border-radius:4px"></div>
<div class="t" style="left:1203.30px;top:948px;font-size:12px;line-height:12px;color:#505050;-webkit-text-stroke:0.2px currentColor;letter-spacing:0.114px;-webkit-text-stroke:0.4px #505050;">unintended</div>
<div class="a" style="left:52px;top:1012px;width:2188px;height:1px;background:rgba(0,0,0,.095)"></div>
<div class="t" style="left:60.90px;top:988px;font-size:12px;line-height:12px;color:#3a3a3a;-webkit-text-stroke:0.2px currentColor;letter-spacing:0.554px;">ge-0/0/5.0</div>
<div class="t" style="left:338.20px;top:988px;font-size:12px;line-height:12px;color:#3a3a3a;-webkit-text-stroke:0.2px currentColor;letter-spacing:0.245px;">Unknown</div>
<div class="t" style="left:985.20px;top:988px;font-size:12px;line-height:12px;color:#3a3a3a;-webkit-text-stroke:0.2px currentColor;letter-spacing:-0.344px;">up</div>
<div class="t" style="left:1541.60px;top:988px;font-size:12px;line-height:12px;color:#3a3a3a;-webkit-text-stroke:0.2px currentColor;letter-spacing:-0.069px;">a minute ago</div>
<div class="t" style="left:1884.60px;top:988px;font-size:12px;line-height:12px;color:#3a3a3a;-webkit-text-stroke:0.2px currentColor;letter-spacing:-0.069px;">a minute ago</div>
<div class="a" style="left:1193px;top:980px;width:81px;height:26px;background:#e6e6e6;border-radius:4px"></div>
<div class="t" style="left:1203.30px;top:987px;font-size:12px;line-height:12px;color:#505050;-webkit-text-stroke:0.2px currentColor;letter-spacing:0.114px;-webkit-text-stroke:0.4px #505050;">unintended</div>
<div class="a" style="left:52px;top:1051px;width:2188px;height:1px;background:rgba(0,0,0,.095)"></div>
<div class="t" style="left:60.90px;top:1027px;font-size:12px;line-height:12px;color:#3a3a3a;-webkit-text-stroke:0.2px currentColor;letter-spacing:0.712px;">ge-0/0/6</div>
<div class="t" style="left:338.20px;top:1027px;font-size:12px;line-height:12px;color:#3a3a3a;-webkit-text-stroke:0.2px currentColor;letter-spacing:0.245px;">Unknown</div>
<div class="t" style="left:985.20px;top:1027px;font-size:12px;line-height:12px;color:#3a3a3a;-webkit-text-stroke:0.2px currentColor;letter-spacing:-0.344px;">up</div>
<div class="t" style="left:1541.60px;top:1027px;font-size:12px;line-height:12px;color:#3a3a3a;-webkit-text-stroke:0.2px currentColor;letter-spacing:-0.069px;">a minute ago</div>
<div class="t" style="left:1884.60px;top:1027px;font-size:12px;line-height:12px;color:#3a3a3a;-webkit-text-stroke:0.2px currentColor;letter-spacing:-0.069px;">a minute ago</div>
<div class="a" style="left:1193px;top:1019px;width:81px;height:26px;background:#e6e6e6;border-radius:4px"></div>
<div class="t" style="left:1203.30px;top:1026px;font-size:12px;line-height:12px;color:#505050;-webkit-text-stroke:0.2px currentColor;letter-spacing:0.114px;-webkit-text-stroke:0.4px #505050;">unintended</div>
<div class="a" style="left:52px;top:1090px;width:2188px;height:1px;background:rgba(0,0,0,.095)"></div>
<div class="t" style="left:60.90px;top:1066px;font-size:12px;line-height:12px;color:#3a3a3a;-webkit-text-stroke:0.2px currentColor;letter-spacing:0.554px;">ge-0/0/6.0</div>
<div class="t" style="left:338.20px;top:1066px;font-size:12px;line-height:12px;color:#3a3a3a;-webkit-text-stroke:0.2px currentColor;letter-spacing:0.245px;">Unknown</div>
<div class="t" style="left:985.20px;top:1066px;font-size:12px;line-height:12px;color:#3a3a3a;-webkit-text-stroke:0.2px currentColor;letter-spacing:-0.344px;">up</div>
<div class="t" style="left:1541.60px;top:1066px;font-size:12px;line-height:12px;color:#3a3a3a;-webkit-text-stroke:0.2px currentColor;letter-spacing:-0.069px;">a minute ago</div>
<div class="t" style="left:1884.60px;top:1066px;font-size:12px;line-height:12px;color:#3a3a3a;-webkit-text-stroke:0.2px currentColor;letter-spacing:-0.069px;">a minute ago</div>
<div class="a" style="left:1193px;top:1058px;width:81px;height:26px;background:#e6e6e6;border-radius:4px"></div>
<div class="t" style="left:1203.30px;top:1065px;font-size:12px;line-height:12px;color:#505050;-webkit-text-stroke:0.2px currentColor;letter-spacing:0.114px;-webkit-text-stroke:0.4px #505050;">unintended</div>
<div class="a" style="left:329px;top:417px;width:1px;height:676px;background:rgba(0,0,0,.08)"></div>
<div class="a" style="left:737px;top:373px;width:1px;height:720px;background:rgba(0,0,0,.08)"></div>
<div class="a" style="left:975px;top:373px;width:1px;height:720px;background:rgba(0,0,0,.08)"></div>
<div class="a" style="left:1184px;top:373px;width:1px;height:720px;background:rgba(0,0,0,.08)"></div>
<div class="a" style="left:1532px;top:417px;width:1px;height:676px;background:rgba(0,0,0,.08)"></div>
<div class="a" style="left:1875px;top:417px;width:1px;height:676px;background:rgba(0,0,0,.08)"></div>
<div class="t" style="left:746.10px;top:391px;font-size:11.5px;line-height:11.5px;color:#333;font-weight:bold;letter-spacing:-0.146px;">Expected</div>
<div class="t" style="left:985.30px;top:391px;font-size:11.5px;line-height:11.5px;color:#333;font-weight:bold;letter-spacing:-0.188px;">Actual</div>
<div class="t" style="left:61.30px;top:437px;font-size:11.5px;line-height:11.5px;color:#333;font-weight:bold;letter-spacing:-0.013px;">Interface</div>
<div class="a" style="left:115.9px;top:437px;width:7px;height:9px"><svg width="7" height="9" viewBox="0 0 7 9"><path d="M3.5 0 L7 3.6 H0 Z" fill="#666"/><path d="M3.5 9 L7 5.2 H0 Z" fill="#666"/></svg></div>
<div class="t" style="left:338.70px;top:437px;font-size:11.5px;line-height:11.5px;color:#333;font-weight:bold;letter-spacing:-0.574px;">Role</div>
<div class="a" style="left:368.7px;top:437px;width:7px;height:9px"><svg width="7" height="9" viewBox="0 0 7 9"><path d="M3.5 0 L7 3.6 H0 Z" fill="#666"/><path d="M3.5 9 L7 5.2 H0 Z" fill="#666"/></svg></div>
<div class="t" style="left:746.10px;top:437px;font-size:11.5px;line-height:11.5px;color:#333;font-weight:bold;letter-spacing:-0.102px;">State</div>
<div class="a" style="left:780.6px;top:437px;width:7px;height:9px"><svg width="7" height="9" viewBox="0 0 7 9"><path d="M3.5 0 L7 3.6 H0 Z" fill="#666"/><path d="M3.5 9 L7 5.2 H0 Z" fill="#666"/></svg></div>
<div class="t" style="left:985.30px;top:437px;font-size:11.5px;line-height:11.5px;color:#333;font-weight:bold;letter-spacing:-0.102px;">State</div>
<div class="a" style="left:1019.8px;top:437px;width:7px;height:9px"><svg width="7" height="9" viewBox="0 0 7 9"><path d="M3.5 0 L7 3.6 H0 Z" fill="#666"/><path d="M3.5 9 L7 5.2 H0 Z" fill="#666"/></svg></div>
<div class="t" style="left:1193.50px;top:437px;font-size:11.5px;line-height:11.5px;color:#333;font-weight:bold;letter-spacing:-0.020px;">Intent status</div>
<div class="a" style="left:1268.4px;top:437px;width:7px;height:9px"><svg width="7" height="9" viewBox="0 0 7 9"><path d="M3.5 0 L7 3.6 H0 Z" fill="#666"/><path d="M3.5 9 L7 5.2 H0 Z" fill="#666"/></svg></div>
<div class="t" style="left:1541.60px;top:437px;font-size:11.5px;line-height:11.5px;color:#333;font-weight:bold;letter-spacing:-0.120px;">Last fetched</div>
<div class="a" style="left:1614.8px;top:437px;width:7px;height:9px"><svg width="7" height="9" viewBox="0 0 7 9"><path d="M3.5 0 L7 3.6 H0 Z" fill="#666"/><path d="M3.5 9 L7 5.2 H0 Z" fill="#666"/></svg></div>
<div class="t" style="left:1884.60px;top:437px;font-size:11.5px;line-height:11.5px;color:#333;font-weight:bold;letter-spacing:-0.178px;">Last modified</div>
<div class="a" style="left:1964.0px;top:437px;width:7px;height:9px"><svg width="7" height="9" viewBox="0 0 7 9"><path d="M3.5 0 L7 3.6 H0 Z" fill="#666"/><path d="M3.5 9 L7 5.2 H0 Z" fill="#666"/></svg></div>
<svg class="cn" width="103" height="103" style="left:0;top:0"><path d="M0.00,101.00 L0.03,96.45 L0.12,92.80 L0.27,89.42 L0.47,86.22 L0.74,83.15 L1.06,80.17 L1.44,77.28 L1.88,74.47 L2.38,71.72 L2.94,69.03 L3.55,66.40 L4.22,63.82 L4.95,61.30 L5.74,58.83 L6.58,56.40 L7.48,54.03 L8.44,51.70 L9.45,49.42 L10.52,47.19 L11.64,45.01 L12.81,42.87 L14.05,40.78 L15.33,38.74 L16.67,36.74 L18.06,34.80 L19.50,32.90 L21.00,31.05 L22.55,29.25 L24.15,27.50 L25.80,25.80 L27.50,24.15 L29.25,22.55 L31.05,21.00 L32.90,19.50 L34.80,18.06 L36.74,16.67 L38.74,15.33 L40.78,14.05 L42.87,12.81 L45.01,11.64 L47.19,10.52 L49.42,9.45 L51.70,8.44 L54.03,7.48 L56.40,6.58 L58.83,5.74 L61.30,4.95 L63.82,4.22 L66.40,3.55 L69.03,2.94 L71.72,2.38 L74.47,1.88 L77.28,1.44 L80.17,1.06 L83.15,0.74 L86.22,0.47 L89.42,0.27 L92.80,0.12 L96.45,0.03 L101.00,0.00" fill="none" stroke="#fff" stroke-width="2.2" shape-rendering="crispEdges"/><path d="M0,0 L0,101 L0.00,101.00 L0.03,96.45 L0.12,92.80 L0.27,89.42 L0.47,86.22 L0.74,83.15 L1.06,80.17 L1.44,77.28 L1.88,74.47 L2.38,71.72 L2.94,69.03 L3.55,66.40 L4.22,63.82 L4.95,61.30 L5.74,58.83 L6.58,56.40 L7.48,54.03 L8.44,51.70 L9.45,49.42 L10.52,47.19 L11.64,45.01 L12.81,42.87 L14.05,40.78 L15.33,38.74 L16.67,36.74 L18.06,34.80 L19.50,32.90 L21.00,31.05 L22.55,29.25 L24.15,27.50 L25.80,25.80 L27.50,24.15 L29.25,22.55 L31.05,21.00 L32.90,19.50 L34.80,18.06 L36.74,16.67 L38.74,15.33 L40.78,14.05 L42.87,12.81 L45.01,11.64 L47.19,10.52 L49.42,9.45 L51.70,8.44 L54.03,7.48 L56.40,6.58 L58.83,5.74 L61.30,4.95 L63.82,4.22 L66.40,3.55 L69.03,2.94 L71.72,2.38 L74.47,1.88 L77.28,1.44 L80.17,1.06 L83.15,0.74 L86.22,0.47 L89.42,0.27 L92.80,0.12 L96.45,0.03 L101.00,0.00 L101,0 Z" fill="#000" shape-rendering="crispEdges"/></svg>
<svg class="cn" width="103" height="103" style="right:0;top:0;transform:scaleX(-1)"><path d="M0.00,101.00 L0.03,96.45 L0.12,92.80 L0.27,89.42 L0.47,86.22 L0.74,83.15 L1.06,80.17 L1.44,77.28 L1.88,74.47 L2.38,71.72 L2.94,69.03 L3.55,66.40 L4.22,63.82 L4.95,61.30 L5.74,58.83 L6.58,56.40 L7.48,54.03 L8.44,51.70 L9.45,49.42 L10.52,47.19 L11.64,45.01 L12.81,42.87 L14.05,40.78 L15.33,38.74 L16.67,36.74 L18.06,34.80 L19.50,32.90 L21.00,31.05 L22.55,29.25 L24.15,27.50 L25.80,25.80 L27.50,24.15 L29.25,22.55 L31.05,21.00 L32.90,19.50 L34.80,18.06 L36.74,16.67 L38.74,15.33 L40.78,14.05 L42.87,12.81 L45.01,11.64 L47.19,10.52 L49.42,9.45 L51.70,8.44 L54.03,7.48 L56.40,6.58 L58.83,5.74 L61.30,4.95 L63.82,4.22 L66.40,3.55 L69.03,2.94 L71.72,2.38 L74.47,1.88 L77.28,1.44 L80.17,1.06 L83.15,0.74 L86.22,0.47 L89.42,0.27 L92.80,0.12 L96.45,0.03 L101.00,0.00" fill="none" stroke="#fff" stroke-width="2.2" shape-rendering="crispEdges"/><path d="M0,0 L0,101 L0.00,101.00 L0.03,96.45 L0.12,92.80 L0.27,89.42 L0.47,86.22 L0.74,83.15 L1.06,80.17 L1.44,77.28 L1.88,74.47 L2.38,71.72 L2.94,69.03 L3.55,66.40 L4.22,63.82 L4.95,61.30 L5.74,58.83 L6.58,56.40 L7.48,54.03 L8.44,51.70 L9.45,49.42 L10.52,47.19 L11.64,45.01 L12.81,42.87 L14.05,40.78 L15.33,38.74 L16.67,36.74 L18.06,34.80 L19.50,32.90 L21.00,31.05 L22.55,29.25 L24.15,27.50 L25.80,25.80 L27.50,24.15 L29.25,22.55 L31.05,21.00 L32.90,19.50 L34.80,18.06 L36.74,16.67 L38.74,15.33 L40.78,14.05 L42.87,12.81 L45.01,11.64 L47.19,10.52 L49.42,9.45 L51.70,8.44 L54.03,7.48 L56.40,6.58 L58.83,5.74 L61.30,4.95 L63.82,4.22 L66.40,3.55 L69.03,2.94 L71.72,2.38 L74.47,1.88 L77.28,1.44 L80.17,1.06 L83.15,0.74 L86.22,0.47 L89.42,0.27 L92.80,0.12 L96.45,0.03 L101.00,0.00 L101,0 Z" fill="#000" shape-rendering="crispEdges"/></svg>
<svg class="cn" width="103" height="103" style="left:0;bottom:0;transform:scaleY(-1)"><path d="M0.00,101.00 L0.03,96.45 L0.12,92.80 L0.27,89.42 L0.47,86.22 L0.74,83.15 L1.06,80.17 L1.44,77.28 L1.88,74.47 L2.38,71.72 L2.94,69.03 L3.55,66.40 L4.22,63.82 L4.95,61.30 L5.74,58.83 L6.58,56.40 L7.48,54.03 L8.44,51.70 L9.45,49.42 L10.52,47.19 L11.64,45.01 L12.81,42.87 L14.05,40.78 L15.33,38.74 L16.67,36.74 L18.06,34.80 L19.50,32.90 L21.00,31.05 L22.55,29.25 L24.15,27.50 L25.80,25.80 L27.50,24.15 L29.25,22.55 L31.05,21.00 L32.90,19.50 L34.80,18.06 L36.74,16.67 L38.74,15.33 L40.78,14.05 L42.87,12.81 L45.01,11.64 L47.19,10.52 L49.42,9.45 L51.70,8.44 L54.03,7.48 L56.40,6.58 L58.83,5.74 L61.30,4.95 L63.82,4.22 L66.40,3.55 L69.03,2.94 L71.72,2.38 L74.47,1.88 L77.28,1.44 L80.17,1.06 L83.15,0.74 L86.22,0.47 L89.42,0.27 L92.80,0.12 L96.45,0.03 L101.00,0.00" fill="none" stroke="#fff" stroke-width="2.2" shape-rendering="crispEdges"/><path d="M0,0 L0,101 L0.00,101.00 L0.03,96.45 L0.12,92.80 L0.27,89.42 L0.47,86.22 L0.74,83.15 L1.06,80.17 L1.44,77.28 L1.88,74.47 L2.38,71.72 L2.94,69.03 L3.55,66.40 L4.22,63.82 L4.95,61.30 L5.74,58.83 L6.58,56.40 L7.48,54.03 L8.44,51.70 L9.45,49.42 L10.52,47.19 L11.64,45.01 L12.81,42.87 L14.05,40.78 L15.33,38.74 L16.67,36.74 L18.06,34.80 L19.50,32.90 L21.00,31.05 L22.55,29.25 L24.15,27.50 L25.80,25.80 L27.50,24.15 L29.25,22.55 L31.05,21.00 L32.90,19.50 L34.80,18.06 L36.74,16.67 L38.74,15.33 L40.78,14.05 L42.87,12.81 L45.01,11.64 L47.19,10.52 L49.42,9.45 L51.70,8.44 L54.03,7.48 L56.40,6.58 L58.83,5.74 L61.30,4.95 L63.82,4.22 L66.40,3.55 L69.03,2.94 L71.72,2.38 L74.47,1.88 L77.28,1.44 L80.17,1.06 L83.15,0.74 L86.22,0.47 L89.42,0.27 L92.80,0.12 L96.45,0.03 L101.00,0.00 L101,0 Z" fill="#000" shape-rendering="crispEdges"/></svg>
<svg class="cn" width="103" height="103" style="right:0;bottom:0;transform:scale(-1,-1)"><path d="M0.00,101.00 L0.03,96.45 L0.12,92.80 L0.27,89.42 L0.47,86.22 L0.74,83.15 L1.06,80.17 L1.44,77.28 L1.88,74.47 L2.38,71.72 L2.94,69.03 L3.55,66.40 L4.22,63.82 L4.95,61.30 L5.74,58.83 L6.58,56.40 L7.48,54.03 L8.44,51.70 L9.45,49.42 L10.52,47.19 L11.64,45.01 L12.81,42.87 L14.05,40.78 L15.33,38.74 L16.67,36.74 L18.06,34.80 L19.50,32.90 L21.00,31.05 L22.55,29.25 L24.15,27.50 L25.80,25.80 L27.50,24.15 L29.25,22.55 L31.05,21.00 L32.90,19.50 L34.80,18.06 L36.74,16.67 L38.74,15.33 L40.78,14.05 L42.87,12.81 L45.01,11.64 L47.19,10.52 L49.42,9.45 L51.70,8.44 L54.03,7.48 L56.40,6.58 L58.83,5.74 L61.30,4.95 L63.82,4.22 L66.40,3.55 L69.03,2.94 L71.72,2.38 L74.47,1.88 L77.28,1.44 L80.17,1.06 L83.15,0.74 L86.22,0.47 L89.42,0.27 L92.80,0.12 L96.45,0.03 L101.00,0.00" fill="none" stroke="#fff" stroke-width="2.2" shape-rendering="crispEdges"/><path d="M0,0 L0,101 L0.00,101.00 L0.03,96.45 L0.12,92.80 L0.27,89.42 L0.47,86.22 L0.74,83.15 L1.06,80.17 L1.44,77.28 L1.88,74.47 L2.38,71.72 L2.94,69.03 L3.55,66.40 L4.22,63.82 L4.95,61.30 L5.74,58.83 L6.58,56.40 L7.48,54.03 L8.44,51.70 L9.45,49.42 L10.52,47.19 L11.64,45.01 L12.81,42.87 L14.05,40.78 L15.33,38.74 L16.67,36.74 L18.06,34.80 L19.50,32.90 L21.00,31.05 L22.55,29.25 L24.15,27.50 L25.80,25.80 L27.50,24.15 L29.25,22.55 L31.05,21.00 L32.90,19.50 L34.80,18.06 L36.74,16.67 L38.74,15.33 L40.78,14.05 L42.87,12.81 L45.01,11.64 L47.19,10.52 L49.42,9.45 L51.70,8.44 L54.03,7.48 L56.40,6.58 L58.83,5.74 L61.30,4.95 L63.82,4.22 L66.40,3.55 L69.03,2.94 L71.72,2.38 L74.47,1.88 L77.28,1.44 L80.17,1.06 L83.15,0.74 L86.22,0.47 L89.42,0.27 L92.80,0.12 L96.45,0.03 L101.00,0.00 L101,0 Z" fill="#000" shape-rendering="crispEdges"/></svg>
</div>
</body></html>
